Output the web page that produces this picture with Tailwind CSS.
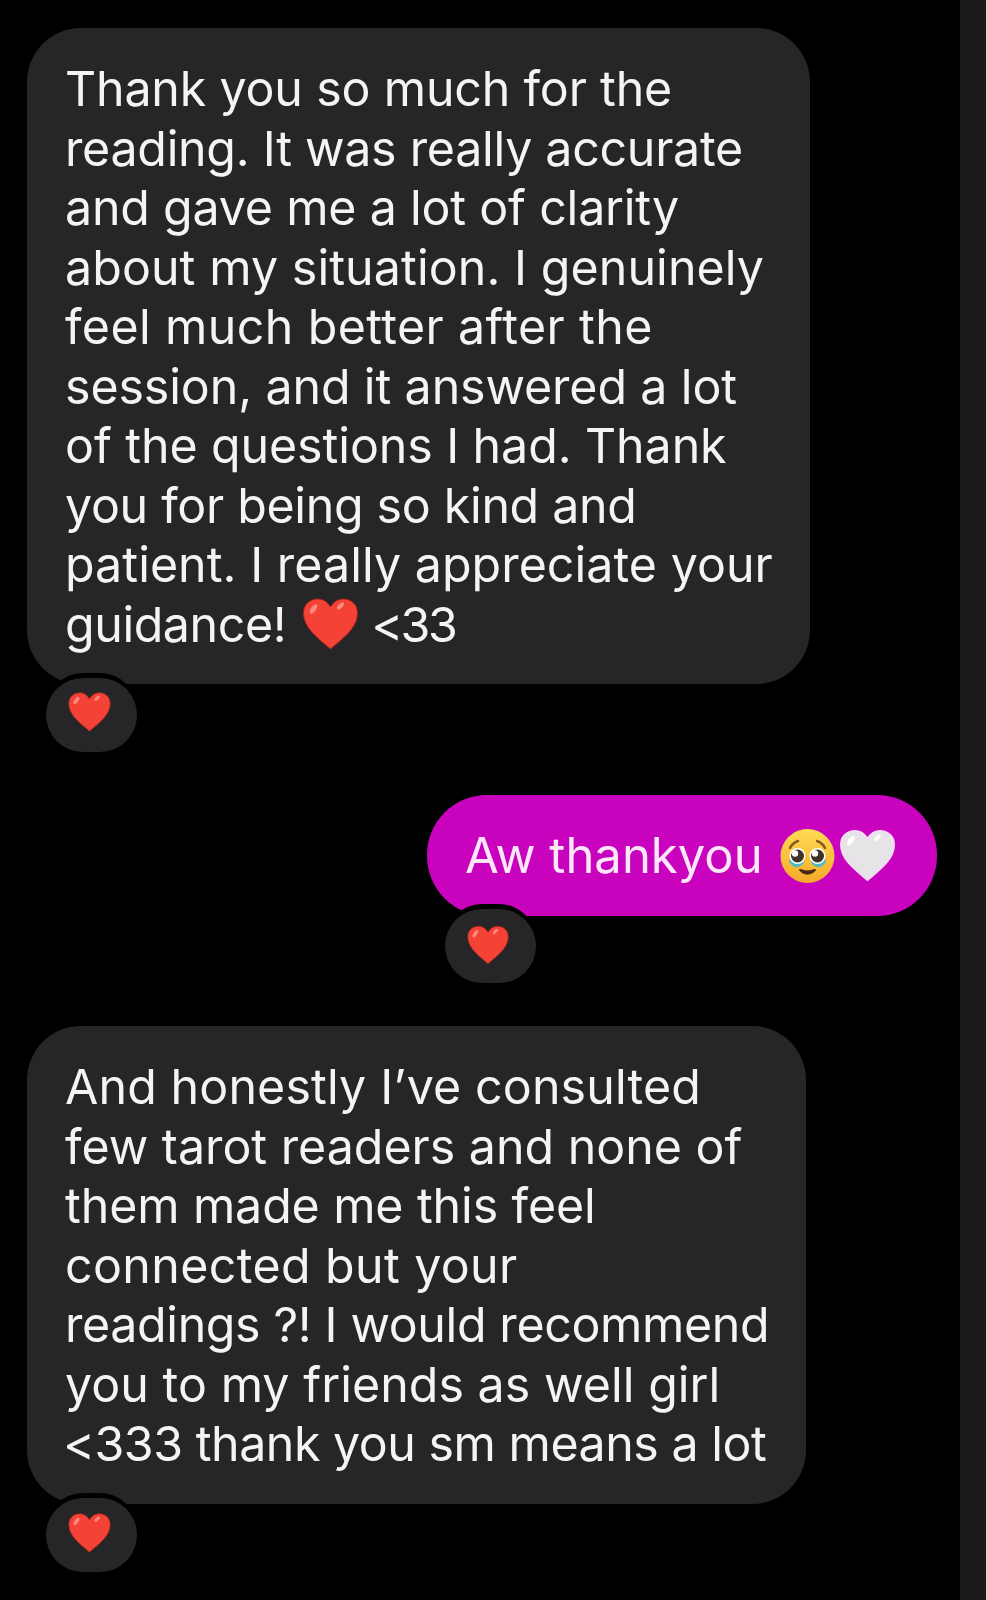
<!doctype html>
<html><head><meta charset="utf-8">
<script src="https://cdn.jsdelivr.net/npm/@tailwindcss/browser@4"></script>
</head>
<body class="bg-black">
<div class="flex h-[1600px] w-[986px] overflow-hidden bg-black font-['Inter',sans-serif] text-[48.3px] leading-[59.5px] text-[#f4f4f4]">
  <main class="flex w-[960px] flex-col pt-[28px]">
    <div class="ml-[27px] w-[783px] rounded-[54px] bg-[#262628] pt-[31px] pr-[20px] pb-[30px] pl-[38px] whitespace-nowrap">
      <p class="tracking-[-0.16px]">Thank you so much for the</p>
      <p class="tracking-[-0.26px]">reading. It was really accurate</p>
      <p class="tracking-[-0.18px]">and gave me a lot of clarity</p>
      <p class="tracking-[0.1px]">about my situation. I genuinely</p>
      <p class="tracking-[0.4px]">feel much better after the</p>
      <p class="tracking-[-0.1px]">session, and it answered a lot</p>
      <p class="tracking-[-0.07px]">of the questions I had. Thank</p>
      <p class="tracking-[-0.29px]">you for being so kind and</p>
      <p class="tracking-[0.06px]">patient. I really appreciate your</p>
      <p class="flex items-center"><span class="tracking-[-0.4px]">guidance!</span>
        <svg class="ml-[16px] h-[52px] w-[57px]" viewBox="0 0 56 52"><path d="M28 51C18 42 1 31 1 15 1 6 8 1 15 1c6 0 10 3 13 8 3-5 7-8 13-8 7 0 14 5 14 14 0 16-17 27-27 36z" fill="#f44336" stroke="#a82318" stroke-width="1"/><ellipse cx="11" cy="11" rx="2.5" ry="5.5" transform="rotate(35 11 11)" fill="#f98a80"/><ellipse cx="38" cy="8" rx="2" ry="4.5" transform="rotate(45 38 8)" fill="#f98a80"/></svg>
        <span class="ml-[12px] tracking-[-2.5px]">&lt;33</span></p>
    </div>
    <div class="relative z-10 mt-[-6px] ml-[46px] flex h-[74px] w-[91px] items-start justify-center rounded-[37px] bg-[#262628] pt-[14px] pr-[4px] shadow-[0_-5px_0_0_#000]">
      <svg class="h-[40px] w-[43px]" viewBox="0 0 56 52"><path d="M28 51C18 42 1 31 1 15 1 6 8 1 15 1c6 0 10 3 13 8 3-5 7-8 13-8 7 0 14 5 14 14 0 16-17 27-27 36z" fill="#f44336" stroke="#a82318" stroke-width="1"/><ellipse cx="11" cy="11" rx="2.5" ry="5.5" transform="rotate(35 11 11)" fill="#f98a80"/><ellipse cx="38" cy="8" rx="2" ry="4.5" transform="rotate(45 38 8)" fill="#f98a80"/></svg>
    </div>

    <div class="mt-[43px] ml-[427px] flex h-[121px] w-[510px] items-center gap-[17px] rounded-[60px] bg-[#c802bd] pl-[38px] whitespace-nowrap text-[#fbe6fa]">
      <span class="text-[49px]">Aw thankyou</span>
      <span class="flex items-center gap-[5px]">
        <svg class="h-[54px] w-[55px]" viewBox="0 0 55 54"><defs><linearGradient id="f" x1="0" y1="0" x2="0" y2="1"><stop offset="0" stop-color="#fddc52"/><stop offset="1" stop-color="#f6a92a"/></linearGradient></defs><circle cx="27.5" cy="27" r="27" fill="url(#f)"/><path d="M10 19c2-4 5-6 8-7M45 19c-2-4-5-6-8-7" fill="none" stroke="#8a5a20" stroke-width="2.5" stroke-linecap="round"/><path d="M9 32c3 8 12 8 15 1l-3-7H12zM31 33c3 7 12 7 15-1l-3-6H34z" fill="#4fb8c0"/><circle cx="17.5" cy="27" r="8" fill="#fff"/><circle cx="37.5" cy="27" r="8" fill="#fff"/><circle cx="17.5" cy="27" r="6.5" fill="#3f3226"/><circle cx="37.5" cy="27" r="6.5" fill="#3f3226"/><circle cx="15" cy="24.5" r="3.2" fill="#fff"/><circle cx="35" cy="24.5" r="3.2" fill="#fff"/><path d="M20 41c4 5 11 5 15 0-5 2-10 2-15 0z" fill="#4a2a10" stroke="#4a2a10" stroke-width="2" stroke-linejoin="round"/></svg>
        <svg class="h-[53px] w-[55px]" viewBox="0 0 56 52"><path d="M28 51C18 42 1 31 1 15 1 6 8 1 15 1c6 0 10 3 13 8 3-5 7-8 13-8 7 0 14 5 14 14 0 16-17 27-27 36z" fill="#e6e4e6" stroke="#f3dcf3" stroke-width="2"/><ellipse cx="11" cy="11" rx="2.5" ry="5.5" transform="rotate(35 11 11)" fill="#fff"/><ellipse cx="38" cy="8" rx="2" ry="4.5" transform="rotate(45 38 8)" fill="#fff"/></svg>
      </span>
    </div>
    <div class="relative z-10 mt-[-7px] ml-[445px] flex h-[74px] w-[91px] items-start justify-center rounded-[37px] bg-[#262628] pt-[16px] pr-[5px] shadow-[0_-5px_0_0_#000]">
      <svg class="h-[40px] w-[42px]" viewBox="0 0 56 52"><path d="M28 51C18 42 1 31 1 15 1 6 8 1 15 1c6 0 10 3 13 8 3-5 7-8 13-8 7 0 14 5 14 14 0 16-17 27-27 36z" fill="#f44336" stroke="#a82318" stroke-width="1"/><ellipse cx="11" cy="11" rx="2.5" ry="5.5" transform="rotate(35 11 11)" fill="#f98a80"/><ellipse cx="38" cy="8" rx="2" ry="4.5" transform="rotate(45 38 8)" fill="#f98a80"/></svg>
    </div>

    <div class="mt-[43px] ml-[27px] w-[779px] rounded-[54px] bg-[#262628] pt-[31px] pr-[20px] pb-[30px] pl-[38px] whitespace-nowrap">
      <p class="tracking-[0.15px]">And honestly I’ve consulted</p>
      <p>few tarot readers and none of</p>
      <p class="tracking-[-0.1px]">them made me this feel</p>
      <p class="tracking-[0.4px]">connected but your</p>
      <p class="tracking-[-0.35px]">readings ?! I would recommend</p>
      <p class="tracking-[0.07px]">you to my friends as well girl</p>
      <p class="ml-[-2px] tracking-[-0.46px]">&lt;333 thank you sm means a lot</p>
    </div>
    <div class="relative z-10 mt-[-6px] ml-[46px] flex h-[74px] w-[91px] items-start justify-center rounded-[37px] bg-[#262628] pt-[15px] pr-[4px] shadow-[0_-5px_0_0_#000]">
      <svg class="h-[40px] w-[43px]" viewBox="0 0 56 52"><path d="M28 51C18 42 1 31 1 15 1 6 8 1 15 1c6 0 10 3 13 8 3-5 7-8 13-8 7 0 14 5 14 14 0 16-17 27-27 36z" fill="#f44336" stroke="#a82318" stroke-width="1"/><ellipse cx="11" cy="11" rx="2.5" ry="5.5" transform="rotate(35 11 11)" fill="#f98a80"/><ellipse cx="38" cy="8" rx="2" ry="4.5" transform="rotate(45 38 8)" fill="#f98a80"/></svg>
    </div>
  </main>
  <aside class="h-full w-[26px] bg-[#1a1a1a]"></aside>
</div>
</body></html>
